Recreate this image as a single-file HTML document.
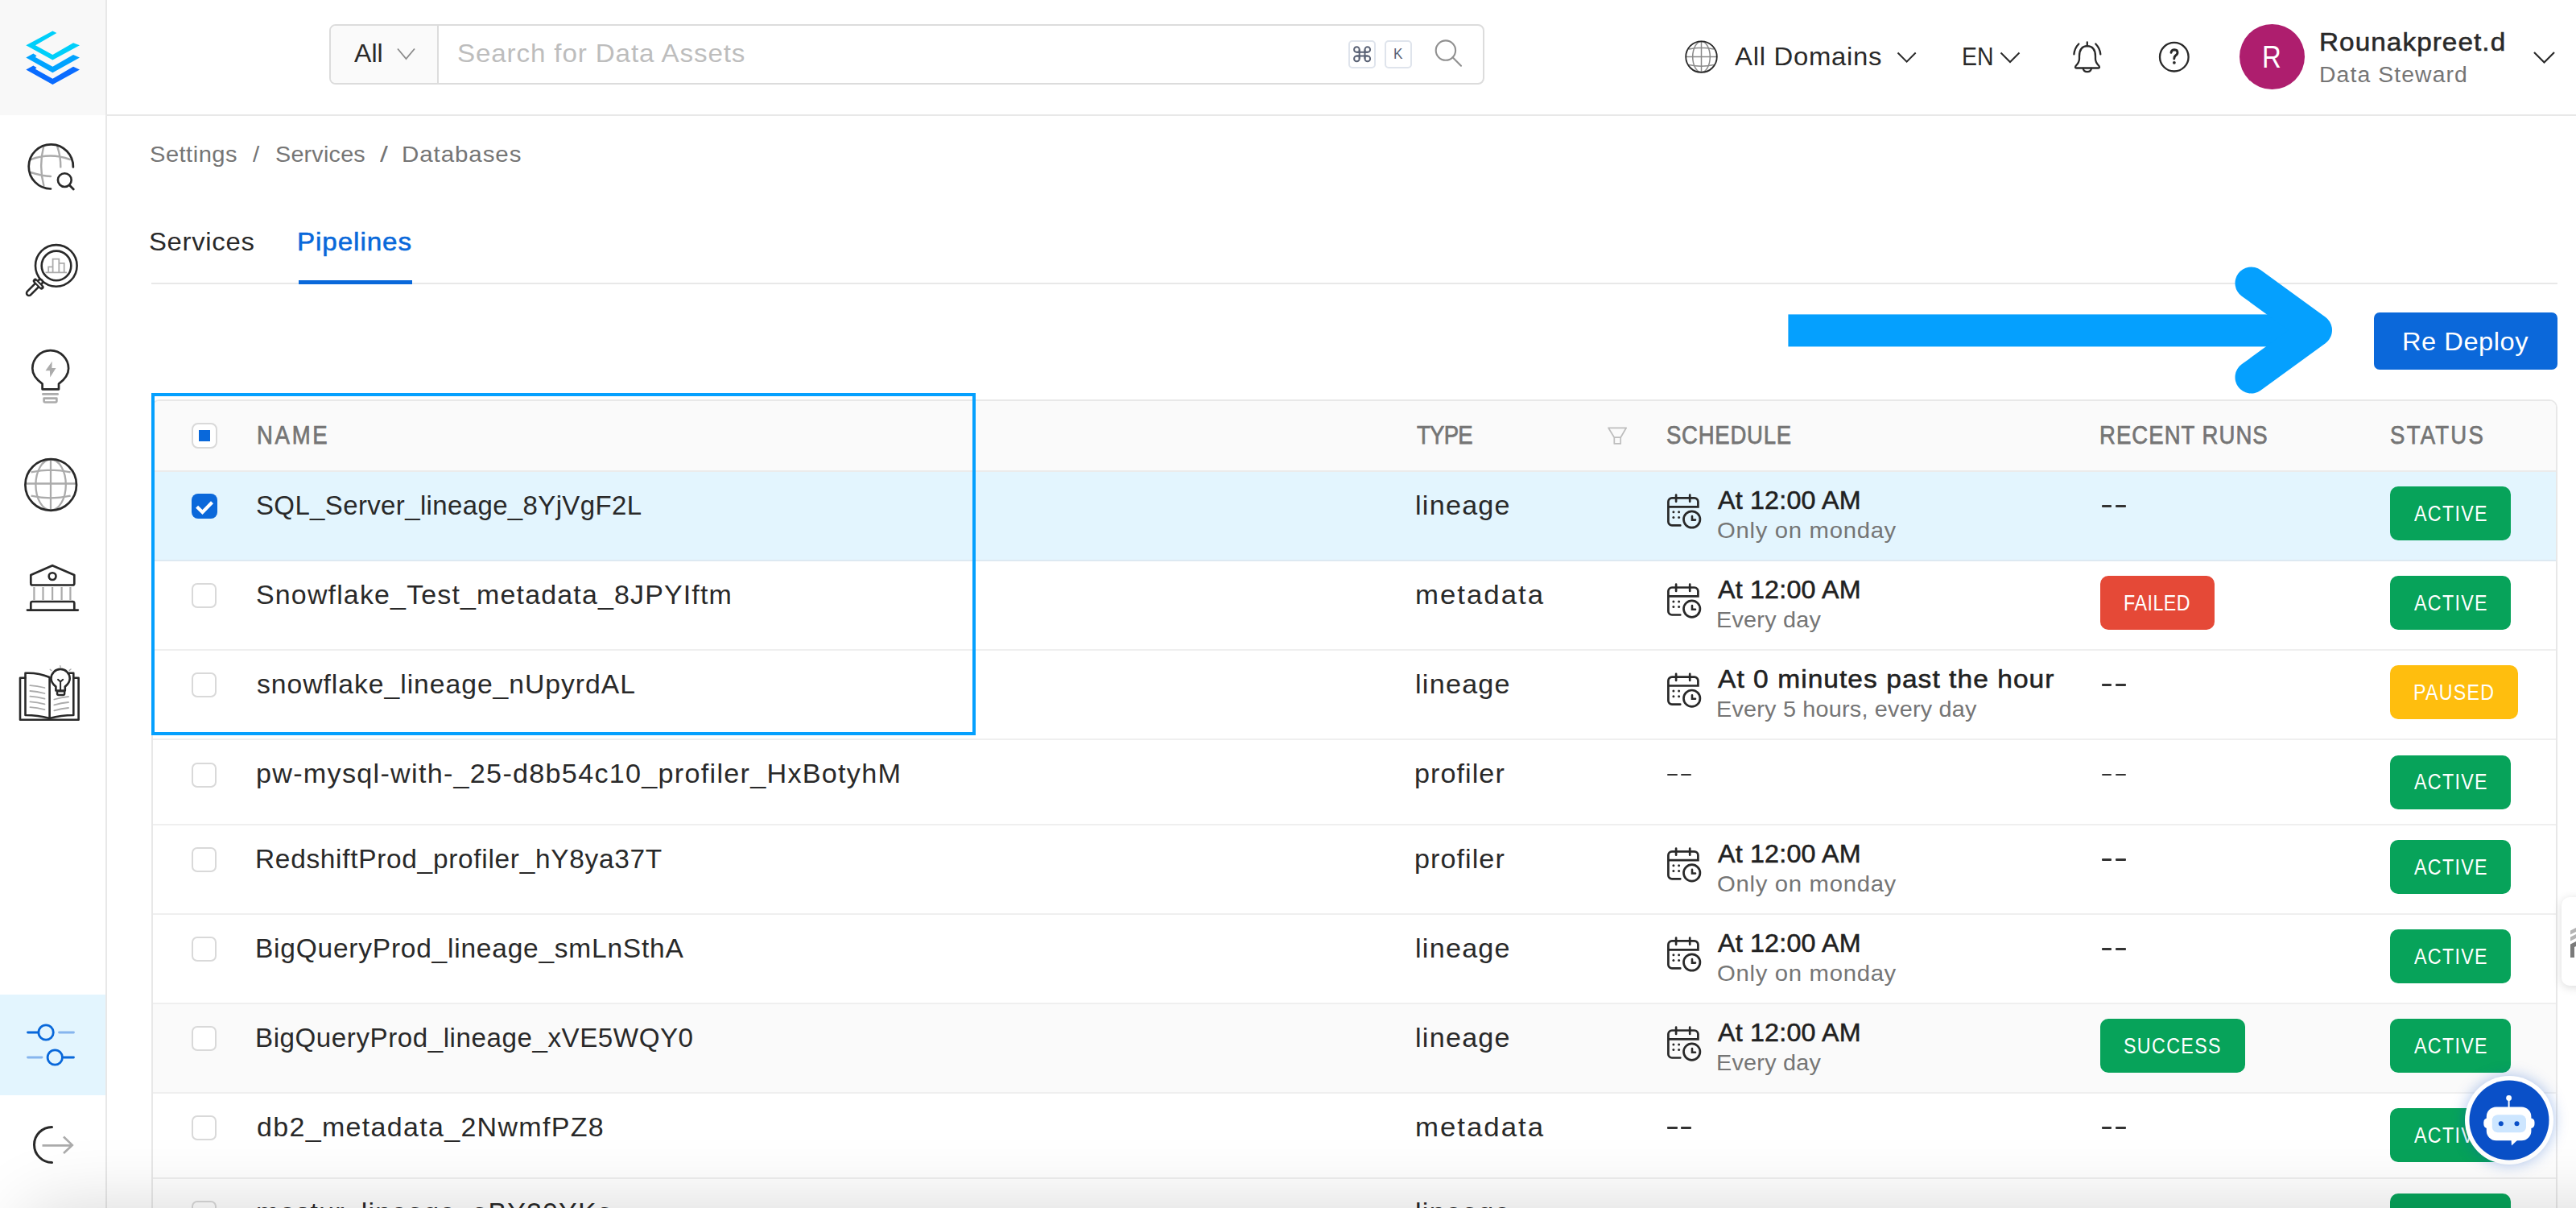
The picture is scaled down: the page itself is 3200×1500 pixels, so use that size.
<!DOCTYPE html>
<html><head><meta charset="utf-8"><title>Pipelines</title>
<style>
html,body{margin:0;padding:0;width:3200px;height:1500px;overflow:hidden;background:#fff}
#root{width:3200px;height:1500px;overflow:hidden;position:relative;background:#fff;font-family:"Liberation Sans",sans-serif}
.t{position:absolute;white-space:nowrap;transform-origin:0 0}
.ov{position:absolute;left:0;top:0}
</style></head><body><div id="root">
<div style="position:absolute;left:0px;top:0px;width:131px;height:143px;background:#f8f8f8"></div>
<div style="position:absolute;left:0px;top:1235px;width:131px;height:125px;background:#e3f5fe"></div>
<div style="position:absolute;left:131px;top:0px;width:2px;height:1500px;background:#e8e8e8"></div>
<div style="position:absolute;left:133px;top:142px;width:3067px;height:2px;background:#e8e8e8"></div>
<div style="position:absolute;left:409px;top:29.5px;width:1435px;height:75.5px;box-sizing:border-box;border:2px solid #dcdcdc;border-radius:8px;background:#fff;overflow:hidden"></div>
<div style="position:absolute;left:411px;top:31.5px;width:132px;height:71.5px;background:#fafafa;border-radius:6px 0 0 6px"></div>
<div style="position:absolute;left:543px;top:31.5px;width:2px;height:71.5px;background:#dcdcdc"></div>
<div style="position:absolute;left:1674.7px;top:49.7px;width:34.6px;height:34.9px;box-sizing:border-box;border:2px solid #dfe4ec;border-radius:5px"></div>
<div style="position:absolute;left:1719.7px;top:49.7px;width:34.6px;height:34.9px;box-sizing:border-box;border:2px solid #dfe4ec;border-radius:5px"></div>
<div style="position:absolute;left:2782px;top:30px;width:81px;height:81px;border-radius:50%;background:#ae1e6e"></div>
<div style="position:absolute;left:188px;top:350.5px;width:2989px;height:2px;background:#e8e8e8"></div>
<div style="position:absolute;left:371px;top:348px;width:141px;height:5px;background:#0968da"></div>
<div style="position:absolute;left:2949.2px;top:388.4px;width:227.8px;height:71.1px;background:#0b68da;border-radius:7px"></div>
<div style="position:absolute;left:188px;top:496px;width:2989px;height:1100px;box-sizing:border-box;border:2px solid #e8e8e8;border-radius:10px;background:#fff"></div>
<div style="position:absolute;left:190px;top:498px;width:2985px;height:87px;background:#fafafa;border-radius:8px 8px 0 0"></div>
<div style="position:absolute;left:190px;top:586px;width:2985px;height:110.1px;background:#e3f5fe"></div>
<div style="position:absolute;left:190px;top:584px;width:2985px;height:2px;background:#ebebeb"></div>
<div style="position:absolute;left:190px;top:1246.1px;width:2985px;height:111.1px;background:#fafafa"></div>
<div style="position:absolute;left:190px;top:695.1px;width:2985px;height:2px;background:#dde9f2"></div>
<div style="position:absolute;left:190px;top:806.2px;width:2985px;height:2px;background:#efefef"></div>
<div style="position:absolute;left:190px;top:917.3px;width:2985px;height:2px;background:#efefef"></div>
<div style="position:absolute;left:190px;top:1022.9px;width:2985px;height:2px;background:#efefef"></div>
<div style="position:absolute;left:190px;top:1134px;width:2985px;height:2px;background:#efefef"></div>
<div style="position:absolute;left:190px;top:1245.1px;width:2985px;height:2px;background:#efefef"></div>
<div style="position:absolute;left:190px;top:1356.2px;width:2985px;height:2px;background:#efefef"></div>
<div style="position:absolute;left:190px;top:1461.8px;width:2985px;height:2px;background:#efefef"></div>
<div style="position:absolute;left:238.2px;top:525.4px;width:31.6px;height:31.4px;box-sizing:border-box;border:2px solid #d9d9d9;border-radius:8px;background:#fff"></div>
<div style="position:absolute;left:247px;top:534px;width:14px;height:14px;background:#0968da"></div>
<div style="position:absolute;left:238.1px;top:612.9px;width:31.8px;height:31.6px;background:#0b68da;border-radius:8px"></div>
<div style="position:absolute;left:238.3px;top:724.3000000000001px;width:31.2px;height:31.0px;box-sizing:border-box;border:2px solid #d9d9d9;border-radius:7px;background:#fff"></div>
<div style="position:absolute;left:238.3px;top:835.4000000000001px;width:31.2px;height:31.0px;box-sizing:border-box;border:2px solid #d9d9d9;border-radius:7px;background:#fff"></div>
<div style="position:absolute;left:238.3px;top:946.5px;width:31.2px;height:31.0px;box-sizing:border-box;border:2px solid #d9d9d9;border-radius:7px;background:#fff"></div>
<div style="position:absolute;left:238.3px;top:1052.1px;width:31.2px;height:31.0px;box-sizing:border-box;border:2px solid #d9d9d9;border-radius:7px;background:#fff"></div>
<div style="position:absolute;left:238.3px;top:1163.2px;width:31.2px;height:31.0px;box-sizing:border-box;border:2px solid #d9d9d9;border-radius:7px;background:#fff"></div>
<div style="position:absolute;left:238.3px;top:1274.3px;width:31.2px;height:31.0px;box-sizing:border-box;border:2px solid #d9d9d9;border-radius:7px;background:#fff"></div>
<div style="position:absolute;left:238.3px;top:1385.4px;width:31.2px;height:31.0px;box-sizing:border-box;border:2px solid #d9d9d9;border-radius:7px;background:#fff"></div>
<div style="position:absolute;left:238.3px;top:1491.0px;width:31.2px;height:31.0px;box-sizing:border-box;border:2px solid #d9d9d9;border-radius:7px;background:#fff"></div>
<div style="position:absolute;left:2610.8px;top:627.2px;width:12.6px;height:2.6px;background:#333;border-radius:1px"></div>
<div style="position:absolute;left:2628.2px;top:627.2px;width:12.6px;height:2.6px;background:#333;border-radius:1px"></div>
<div style="position:absolute;left:2968.7px;top:604.2px;width:150.2px;height:67px;background:#07a35a;border-radius:10px"></div>
<div style="position:absolute;left:2609px;top:715.3000000000001px;width:141.7px;height:67px;background:#e54937;border-radius:10px"></div>
<div style="position:absolute;left:2968.7px;top:715.3000000000001px;width:150.2px;height:67px;background:#07a35a;border-radius:10px"></div>
<div style="position:absolute;left:2610.8px;top:849.4000000000001px;width:12.6px;height:2.6px;background:#333;border-radius:1px"></div>
<div style="position:absolute;left:2628.2px;top:849.4000000000001px;width:12.6px;height:2.6px;background:#333;border-radius:1px"></div>
<div style="position:absolute;left:2968.7px;top:826.4000000000001px;width:159.3px;height:67px;background:#ffbe0e;border-radius:10px"></div>
<div style="position:absolute;left:2610.8px;top:960.5px;width:12.6px;height:2.6px;background:#333;border-radius:1px"></div>
<div style="position:absolute;left:2628.2px;top:960.5px;width:12.6px;height:2.6px;background:#333;border-radius:1px"></div>
<div style="position:absolute;left:2071.0px;top:960.5px;width:12.6px;height:2.6px;background:#333;border-radius:1px"></div>
<div style="position:absolute;left:2088.4px;top:960.5px;width:12.6px;height:2.6px;background:#333;border-radius:1px"></div>
<div style="position:absolute;left:2968.7px;top:937.5px;width:150.2px;height:67px;background:#07a35a;border-radius:10px"></div>
<div style="position:absolute;left:2610.8px;top:1066.1px;width:12.6px;height:2.6px;background:#333;border-radius:1px"></div>
<div style="position:absolute;left:2628.2px;top:1066.1px;width:12.6px;height:2.6px;background:#333;border-radius:1px"></div>
<div style="position:absolute;left:2968.7px;top:1043.1px;width:150.2px;height:67px;background:#07a35a;border-radius:10px"></div>
<div style="position:absolute;left:2610.8px;top:1177.2px;width:12.6px;height:2.6px;background:#333;border-radius:1px"></div>
<div style="position:absolute;left:2628.2px;top:1177.2px;width:12.6px;height:2.6px;background:#333;border-radius:1px"></div>
<div style="position:absolute;left:2968.7px;top:1154.2px;width:150.2px;height:67px;background:#07a35a;border-radius:10px"></div>
<div style="position:absolute;left:2609px;top:1265.3px;width:179.8px;height:67px;background:#07a35a;border-radius:10px"></div>
<div style="position:absolute;left:2968.7px;top:1265.3px;width:150.2px;height:67px;background:#07a35a;border-radius:10px"></div>
<div style="position:absolute;left:2610.8px;top:1399.4px;width:12.6px;height:2.6px;background:#333;border-radius:1px"></div>
<div style="position:absolute;left:2628.2px;top:1399.4px;width:12.6px;height:2.6px;background:#333;border-radius:1px"></div>
<div style="position:absolute;left:2071.0px;top:1399.4px;width:12.6px;height:2.6px;background:#333;border-radius:1px"></div>
<div style="position:absolute;left:2088.4px;top:1399.4px;width:12.6px;height:2.6px;background:#333;border-radius:1px"></div>
<div style="position:absolute;left:2968.7px;top:1376.4px;width:150.2px;height:67px;background:#07a35a;border-radius:10px"></div>
<div style="position:absolute;left:2610.8px;top:1505.0px;width:12.6px;height:2.6px;background:#333;border-radius:1px"></div>
<div style="position:absolute;left:2628.2px;top:1505.0px;width:12.6px;height:2.6px;background:#333;border-radius:1px"></div>
<div style="position:absolute;left:2071.0px;top:1505.0px;width:12.6px;height:2.6px;background:#333;border-radius:1px"></div>
<div style="position:absolute;left:2088.4px;top:1505.0px;width:12.6px;height:2.6px;background:#333;border-radius:1px"></div>
<div style="position:absolute;left:2968.7px;top:1482.0px;width:150.2px;height:67px;background:#07a35a;border-radius:10px"></div>
<div style="position:absolute;left:3182px;top:1114px;width:40px;height:110px;background:#fff;border-radius:10px;box-shadow:0 2px 12px rgba(0,0,0,0.15)"></div>
<svg class="ov" width="3200" height="1500" viewBox="0 0 3200 1500">
<!-- logo -->
<polygon fill="#00cffa" points="65.4,38.4 70.4,40.9 44,56.3 65.4,68 91,53.3 99,56.3 65.4,74.5 32.3,56.3"/>
<polygon fill="#00a3ff" points="32.3,71.5 41.4,66.6 45.5,69.2 43.9,70.9 65.4,82.8 91,67.9 99,71.5 65.4,90.2"/>
<polygon fill="#0a6cff" points="32.3,86.4 41.4,81.5 45.5,84.1 43.9,85.8 65.4,97.7 91,82.8 99,86.4 65.4,105.1"/>
<!-- sidebar icon 1: globe search -->
<g fill="none" stroke-linecap="round">
<path d="M54.1 182.2 Q48 206 54.4 230.6 M71.3 182.2 Q75.5 195 75.3 207.4 M38.2 198.1 Q62.4 189 86.9 198 M38.2 214 Q52 218.5 63 219" stroke="#ababab" stroke-width="2.4"/>
<path d="M63 234.5 A27.6 27.6 0 1 1 90.9 207.4" stroke="#292929" stroke-width="2.7"/>
<circle cx="80.3" cy="223.6" r="8.4" stroke="#292929" stroke-width="2.6"/>
<path d="M86.6 230.2 L91.3 235" stroke="#292929" stroke-width="2.8"/>
</g>
<!-- icon 2: magnifier chart -->
<g fill="none">
<circle cx="69.8" cy="329.9" r="25.8" stroke="#292929" stroke-width="2.6"/>
<circle cx="70" cy="329.9" r="18.3" stroke="#292929" stroke-width="2.6"/>
<path d="M56.5 338.4 H83 M60.2 338.4 V331.4 H65.6 V338.4 M65.6 338.4 V321.6 H73.3 V338.4 M73.3 338.4 V326.8 H79.7 V338.4" stroke="#ababab" stroke-width="1.8"/>
<path d="M36 364 L50 350" stroke="#292929" stroke-width="8.5" stroke-linecap="round"/>
<path d="M36 364 L50 350" stroke="#fff" stroke-width="3.4" stroke-linecap="round"/>
<path d="M43.8 348.8 L51.6 356.6" stroke="#292929" stroke-width="6" stroke-linecap="round"/>
<path d="M44.6 349.6 L50.8 355.8" stroke="#fff" stroke-width="1.8" stroke-linecap="round"/>
</g>
<!-- icon 3: bulb -->
<g fill="none" stroke-linejoin="round">
<path d="M52.6 483.3 V476.6 Q40.3 468 40.3 457.6 A22.4 22.4 0 0 1 85.1 457.6 Q85.1 468 73 476.6 V483.3 Z" stroke="#292929" stroke-width="2.7"/>
<path d="M53.4 489.4 H71.6" stroke="#ababab" stroke-width="2.8" stroke-linecap="round"/>
<path d="M54.6 494.6 H70.4 V498 A1.5 1.5 0 0 1 68.9 499.5 H56.1 A1.5 1.5 0 0 1 54.6 498 Z" stroke="#ababab" stroke-width="2.6"/>
<polygon points="64.7,448.7 56.5,460.2 61.9,460.2 62.3,468.5 69.5,457 64.4,457" fill="#ababab"/>
</g>
<!-- icon 4: globe -->
<g fill="none">
<g stroke="#ababab" stroke-width="2.3">
<path d="M63 571 V633 M32 600.5 H94.5 M38.6 586.3 Q63 581 87.6 586.3 M38.6 615.7 Q63 621 87.6 615.7"/>
<ellipse cx="63.1" cy="602" rx="18.7" ry="31.5"/>
</g>
<circle cx="63.2" cy="602" r="31.8" stroke="#292929" stroke-width="2.7"/>
</g>
<!-- icon 5: bank -->
<g fill="none" stroke-linejoin="round">
<path d="M65.1 702.2 L38.3 714 V724.5 A2 2 0 0 0 40.3 726.5 H90.3 A2 2 0 0 0 92.3 724.5 V714 Z" stroke="#292929" stroke-width="2.7"/>
<circle cx="65.1" cy="715.6" r="4.4" stroke="#292929" stroke-width="2.6"/>
<path d="M42.4 729 V745 M53.5 729 V745 M65.1 729 V745 M76.6 729 V745 M87.4 729 V745" stroke="#ababab" stroke-width="2.2"/>
<path d="M38.3 757.3 V749 A2 2 0 0 1 40.3 747 H90.3 A2 2 0 0 1 92.3 749 V757.3" stroke="#292929" stroke-width="2.7"/>
<path d="M34 757.6 H96.7" stroke="#292929" stroke-width="2.9" stroke-linecap="round"/>
</g>
<!-- icon 6: book with bulb -->
<g fill="none" stroke-linejoin="round" stroke-linecap="round">
<path d="M31.5 841.7 H25 V893.8 H97.6 V841.7 H91.3" stroke="#292929" stroke-width="2.6"/>
<path d="M61.6 892 V841 Q47 835 31.5 835.8 V888 Q47 888 61.6 892 Q76 888 91.3 888 V835.8 H86" stroke="#292929" stroke-width="2.6"/>
<path d="M37.4 851.2 Q46 851.7 55.5 854 M37.4 858 Q46 858.5 55.5 861 M37.4 864.7 Q46 865.2 55.5 867.7 M37.4 871.4 Q46 871.9 55.5 874.4 M37.4 878.1 Q46 878.6 55.5 881.1" stroke="#ababab" stroke-width="1.8"/>
<path d="M67.3 868.5 Q76 866 85 865 M67.3 875.4 Q76 873 85 872 M67.3 882.3 Q76 880 85 879" stroke="#ababab" stroke-width="1.8"/>
<path d="M69.4 857.5 V852.6 Q63.5 848 63.5 842.5 A11.6 11.6 0 0 1 86.7 842.5 Q86.7 848 80.8 852.6 V857.5 Z" stroke="#292929" stroke-width="2.6" fill="#fff"/>
<path d="M71 858.2 H80.2 V861 A2 2 0 0 1 78.2 863 H73 A2 2 0 0 1 71 861 Z" stroke="#292929" stroke-width="2.4"/>
<path d="M75.1 857 V846.5 M72 843.8 L75.1 846.5 L78.2 843.8" stroke="#292929" stroke-width="2"/>
<path d="M62.2 831.2 L63.8 832.6 M74.8 826.6 L75.2 828.8 M86.2 832.4 L88 831" stroke="#ababab" stroke-width="1.4"/>
</g>
<!-- icon 7: sliders (active) -->
<g fill="none" stroke-linecap="round">
<path d="M34.5 1282 H46.5" stroke="#0968da" stroke-width="2.8"/>
<path d="M73.5 1282 H91.5 M34.5 1313 H52" stroke="#86b5ee" stroke-width="2.8"/>
<path d="M79 1313 H91.5" stroke="#0968da" stroke-width="2.8"/>
<circle cx="57.1" cy="1282" r="9.2" stroke="#0968da" stroke-width="2.8"/>
<circle cx="68.3" cy="1313" r="9.2" stroke="#0968da" stroke-width="2.8"/>
</g>
<!-- icon 8: logout -->
<g fill="none" stroke-linecap="round">
<path d="M64.5 1399.4 A22 22 0 0 0 64.5 1443.4" stroke="#292929" stroke-width="3"/>
<path d="M52.5 1422.4 H89.5 M79 1411.5 L89.8 1421.9 L79 1432" stroke="#ababab" stroke-width="2.6" stroke-linecap="butt"/>
</g>
<!-- header: select chevron -->
<path d="M494 60.5 L504.5 73 L515 60.5" fill="none" stroke="#8c8c8c" stroke-width="1.8"/>
<!-- cmd glyph -->
<g fill="none" stroke="#5a6275" stroke-width="2">
<path d="M1688.7 61.5 V73 M1695.5 61.5 V73 M1685 64.8 H1699 M1685 69.6 H1699"/>
<path d="M1688.7 64.8 H1685.6 A3.3 3.3 0 1 1 1688.7 61.5 Z M1695.5 64.8 V61.5 A3.3 3.3 0 1 1 1698.8 64.8 Z M1688.7 69.6 V72.9 A3.3 3.3 0 1 1 1685.4 69.6 Z M1695.5 69.6 H1698.8 A3.3 3.3 0 1 1 1695.5 72.9 Z"/>
</g>
<!-- search icon -->
<g fill="none" stroke="#909090" stroke-width="2.1" stroke-linecap="round">
<circle cx="1795.9" cy="62.6" r="12.2"/>
<path d="M1804.6 71.3 L1815 81.7"/>
</g>
<!-- domain globe -->
<g fill="none">
<g stroke="#8a8a8a" stroke-width="1.5">
<path d="M2113.5 52 V89.5 M2095 70.6 H2132 M2098 61 Q2113.5 57.5 2129 61 M2098 80.5 Q2113.5 84 2129 80.5"/>
<ellipse cx="2113.5" cy="70.6" rx="10.8" ry="19"/>
</g>
<circle cx="2113.5" cy="70.6" r="19.3" stroke="#292929" stroke-width="1.8"/>
</g>
<path d="M2357.5 65.5 L2368.6 76.6 L2379.7 65.5" fill="none" stroke="#292929" stroke-width="2"/>
<path d="M2485.5 65.5 L2497 77 L2508.5 65.5" fill="none" stroke="#292929" stroke-width="2"/>
<!-- bell -->
<g fill="none" stroke="#292929" stroke-width="2.3" stroke-linecap="round" stroke-linejoin="round">
<path d="M2592.8 57.2 Q2583 57.5 2583 70 V73 Q2583 77.5 2578.5 82 Q2577 84.5 2580 84.5 H2606 Q2609 84.5 2607.5 82 Q2603 77.5 2603 73 V70 Q2603 57.5 2592.8 57.2 Z"/>
<path d="M2592.8 52.5 V57 M2587.7 84.8 A5.2 5 0 0 0 2598 84.8"/>
<path d="M2582.3 54.5 Q2577 60 2576.4 67.4 M2603.3 54.5 Q2608.6 60 2609.3 67.4"/>
</g>
<!-- help -->
<circle cx="2700.8" cy="70.7" r="17.8" fill="none" stroke="#292929" stroke-width="2.3"/>
<path d="M2697 65.3 Q2697.5 61.8 2701.3 61.8 Q2705 62 2705 65.3 Q2705 67.5 2702.5 69 Q2700.8 70.3 2700.8 73" fill="none" stroke="#292929" stroke-width="2.9" stroke-linecap="round"/>
<circle cx="2700.9" cy="77.8" r="1.9" fill="#292929"/>
<!-- user chevron -->
<path d="M3148 65 L3160.5 77.5 L3173 65" fill="none" stroke="#292929" stroke-width="2.2"/>
<!-- header checkbox check -->
<path d="M244.6 629.2 L251.5 636 L263.5 623.7" fill="none" stroke="#fff" stroke-width="4.2" stroke-linejoin="miter"/>
<!-- filter icon -->
<path d="M1998 531.3 H2020.2 L2013.2 543.2 V550.9 H2005.3 V543.2 Z M2005.3 543.2 H2013.2" fill="none" stroke="#bdbdbd" stroke-width="1.7" stroke-linejoin="round"/>
<g transform="translate(0,0.00)" stroke="#292929" stroke-width="2.7" fill="none" stroke-linecap="round">
<path d="M2087.3 652.4 H2077 a4.6 4.6 0 0 1 -4.6 -4.6 V623 a4.6 4.6 0 0 1 4.6 -4.6 H2104.8 a4.6 4.6 0 0 1 4.6 4.6 V629.3 H2072.4"/>
<path d="M2082.1 614.6 V622.8 M2099.2 614.6 V622.8"/>
<circle cx="2101.7" cy="645" r="10.2"/>
<path d="M2102 641 V645.6 H2106" stroke-width="2.6"/>
<g fill="#292929" stroke="none"><circle cx="2078.9" cy="635.8" r="1.5"/><circle cx="2085.6" cy="635.8" r="1.5"/><circle cx="2078.9" cy="642.5" r="1.5"/><circle cx="2085.6" cy="642.5" r="1.5"/></g>
</g>
<g transform="translate(0,111.10)" stroke="#292929" stroke-width="2.7" fill="none" stroke-linecap="round">
<path d="M2087.3 652.4 H2077 a4.6 4.6 0 0 1 -4.6 -4.6 V623 a4.6 4.6 0 0 1 4.6 -4.6 H2104.8 a4.6 4.6 0 0 1 4.6 4.6 V629.3 H2072.4"/>
<path d="M2082.1 614.6 V622.8 M2099.2 614.6 V622.8"/>
<circle cx="2101.7" cy="645" r="10.2"/>
<path d="M2102 641 V645.6 H2106" stroke-width="2.6"/>
<g fill="#292929" stroke="none"><circle cx="2078.9" cy="635.8" r="1.5"/><circle cx="2085.6" cy="635.8" r="1.5"/><circle cx="2078.9" cy="642.5" r="1.5"/><circle cx="2085.6" cy="642.5" r="1.5"/></g>
</g>
<g transform="translate(0,222.20)" stroke="#292929" stroke-width="2.7" fill="none" stroke-linecap="round">
<path d="M2087.3 652.4 H2077 a4.6 4.6 0 0 1 -4.6 -4.6 V623 a4.6 4.6 0 0 1 4.6 -4.6 H2104.8 a4.6 4.6 0 0 1 4.6 4.6 V629.3 H2072.4"/>
<path d="M2082.1 614.6 V622.8 M2099.2 614.6 V622.8"/>
<circle cx="2101.7" cy="645" r="10.2"/>
<path d="M2102 641 V645.6 H2106" stroke-width="2.6"/>
<g fill="#292929" stroke="none"><circle cx="2078.9" cy="635.8" r="1.5"/><circle cx="2085.6" cy="635.8" r="1.5"/><circle cx="2078.9" cy="642.5" r="1.5"/><circle cx="2085.6" cy="642.5" r="1.5"/></g>
</g>
<g transform="translate(0,438.90)" stroke="#292929" stroke-width="2.7" fill="none" stroke-linecap="round">
<path d="M2087.3 652.4 H2077 a4.6 4.6 0 0 1 -4.6 -4.6 V623 a4.6 4.6 0 0 1 4.6 -4.6 H2104.8 a4.6 4.6 0 0 1 4.6 4.6 V629.3 H2072.4"/>
<path d="M2082.1 614.6 V622.8 M2099.2 614.6 V622.8"/>
<circle cx="2101.7" cy="645" r="10.2"/>
<path d="M2102 641 V645.6 H2106" stroke-width="2.6"/>
<g fill="#292929" stroke="none"><circle cx="2078.9" cy="635.8" r="1.5"/><circle cx="2085.6" cy="635.8" r="1.5"/><circle cx="2078.9" cy="642.5" r="1.5"/><circle cx="2085.6" cy="642.5" r="1.5"/></g>
</g>
<g transform="translate(0,550.00)" stroke="#292929" stroke-width="2.7" fill="none" stroke-linecap="round">
<path d="M2087.3 652.4 H2077 a4.6 4.6 0 0 1 -4.6 -4.6 V623 a4.6 4.6 0 0 1 4.6 -4.6 H2104.8 a4.6 4.6 0 0 1 4.6 4.6 V629.3 H2072.4"/>
<path d="M2082.1 614.6 V622.8 M2099.2 614.6 V622.8"/>
<circle cx="2101.7" cy="645" r="10.2"/>
<path d="M2102 641 V645.6 H2106" stroke-width="2.6"/>
<g fill="#292929" stroke="none"><circle cx="2078.9" cy="635.8" r="1.5"/><circle cx="2085.6" cy="635.8" r="1.5"/><circle cx="2078.9" cy="642.5" r="1.5"/><circle cx="2085.6" cy="642.5" r="1.5"/></g>
</g>
<g transform="translate(0,661.10)" stroke="#292929" stroke-width="2.7" fill="none" stroke-linecap="round">
<path d="M2087.3 652.4 H2077 a4.6 4.6 0 0 1 -4.6 -4.6 V623 a4.6 4.6 0 0 1 4.6 -4.6 H2104.8 a4.6 4.6 0 0 1 4.6 4.6 V629.3 H2072.4"/>
<path d="M2082.1 614.6 V622.8 M2099.2 614.6 V622.8"/>
<circle cx="2101.7" cy="645" r="10.2"/>
<path d="M2102 641 V645.6 H2106" stroke-width="2.6"/>
<g fill="#292929" stroke="none"><circle cx="2078.9" cy="635.8" r="1.5"/><circle cx="2085.6" cy="635.8" r="1.5"/><circle cx="2078.9" cy="642.5" r="1.5"/><circle cx="2085.6" cy="642.5" r="1.5"/></g>
</g>
<!-- arrow annotation -->
<rect x="2221.4" y="390.4" width="650" height="40" fill="#05a0fe"/>
<path d="M2796.5 351.5 L2877 410 L2796.5 468.5" fill="none" stroke="#05a0fe" stroke-width="40" stroke-linecap="round" stroke-linejoin="round"/>
<!-- selection box -->
<rect x="190" y="490" width="1020" height="421" fill="none" stroke="#05a0fe" stroke-width="4"/>
</svg>
<div class="t" style="left:439.80px;top:50.40px;font-size:32px;line-height:32px;color:#292929;font-weight:400;letter-spacing:0.030px;transform:scaleX(1.0012)">All</div>
<div class="t" style="left:567.93px;top:50.40px;font-size:32px;line-height:32px;color:#bdbdbd;font-weight:400;letter-spacing:0.827px;transform:scaleX(1.0370)">Search for Data Assets</div>
<div class="t" style="left:1731.37px;top:58.07px;font-size:18.5px;line-height:18.5px;color:#5a6275;font-weight:400;letter-spacing:0.000px;transform:scaleX(0.9273)">K</div>
<div class="t" style="left:2155.20px;top:53.60px;font-size:32px;line-height:32px;color:#292929;font-weight:400;letter-spacing:0.683px;transform:scaleX(1.0275)">All Domains</div>
<div class="t" style="left:2437.13px;top:54.20px;font-size:32px;line-height:32px;color:#292929;font-weight:400;letter-spacing:0.000px;transform:scaleX(0.8897)">EN</div>
<div class="t" style="left:2809.80px;top:51.60px;font-size:38px;line-height:38px;color:#ffffff;font-weight:400;letter-spacing:0.000px;transform:scaleX(0.8652)">R</div>
<div class="t" style="left:2880.82px;top:35.60px;font-size:32px;line-height:32px;color:#292929;font-weight:400;-webkit-text-stroke:0.55px currentColor;letter-spacing:1.014px;transform:scaleX(1.0408)">Rounakpreet.d</div>
<div class="t" style="left:2880.80px;top:79.85px;font-size:27px;line-height:27px;color:#757575;font-weight:400;letter-spacing:1.044px;transform:scaleX(1.0502)">Data Steward</div>
<div class="t" style="left:186.48px;top:176.97px;font-size:28.5px;line-height:28.5px;color:#757575;font-weight:400;letter-spacing:0.461px;transform:scaleX(1.0218)">Settings</div>
<div class="t" style="left:313.70px;top:176.97px;font-size:28.5px;line-height:28.5px;color:#757575;font-weight:400;letter-spacing:0.000px;transform:scaleX(1.0375)">/</div>
<div class="t" style="left:341.89px;top:176.97px;font-size:28.5px;line-height:28.5px;color:#757575;font-weight:400;letter-spacing:0.204px;transform:scaleX(1.0090)">Services</div>
<div class="t" style="left:472.00px;top:176.97px;font-size:28.5px;line-height:28.5px;color:#757575;font-weight:400;letter-spacing:0.000px;transform:scaleX(1.2500)">/</div>
<div class="t" style="left:498.53px;top:176.97px;font-size:28.5px;line-height:28.5px;color:#757575;font-weight:400;letter-spacing:0.876px;transform:scaleX(1.0364)">Databases</div>
<div class="t" style="left:185.45px;top:283.50px;font-size:32px;line-height:32px;color:#292929;font-weight:400;letter-spacing:0.676px;transform:scaleX(1.0270)">Services</div>
<div class="t" style="left:369.42px;top:283.50px;font-size:32px;line-height:32px;color:#0968da;font-weight:400;-webkit-text-stroke:0.55px currentColor;letter-spacing:0.874px;transform:scaleX(1.0381)">Pipelines</div>
<div class="t" style="left:2983.94px;top:407.80px;font-size:32px;line-height:32px;color:#ffffff;font-weight:400;letter-spacing:0.515px;transform:scaleX(1.0192)">Re Deploy</div>
<div class="t" style="left:319.08px;top:524.30px;font-size:32px;line-height:32px;color:#757575;font-weight:400;-webkit-text-stroke:0.75px currentColor;letter-spacing:3.178px;transform:scaleX(0.8600)">NAME</div>
<div class="t" style="left:1759.80px;top:524.30px;font-size:32px;line-height:32px;color:#757575;font-weight:400;-webkit-text-stroke:0.75px currentColor;letter-spacing:-0.884px;transform:scaleX(0.8600)">TYPE</div>
<div class="t" style="left:2070.14px;top:524.30px;font-size:32px;line-height:32px;color:#757575;font-weight:400;-webkit-text-stroke:0.75px currentColor;letter-spacing:0.867px;transform:scaleX(0.8600)">SCHEDULE</div>
<div class="t" style="left:2608.08px;top:524.30px;font-size:32px;line-height:32px;color:#757575;font-weight:400;-webkit-text-stroke:0.75px currentColor;letter-spacing:1.212px;transform:scaleX(0.8600)">RECENT RUNS</div>
<div class="t" style="left:2968.54px;top:524.30px;font-size:32px;line-height:32px;color:#757575;font-weight:400;-webkit-text-stroke:0.75px currentColor;letter-spacing:2.651px;transform:scaleX(0.8600)">STATUS</div>
<div class="t" style="left:317.97px;top:611.98px;font-size:32.5px;line-height:32.5px;color:#292929;font-weight:400;letter-spacing:0.373px;transform:scaleX(1.0143)">SQL_Server_lineage_8YjVgF2L</div>
<div class="t" style="left:1757.70px;top:611.98px;font-size:32.5px;line-height:32.5px;color:#292929;font-weight:400;letter-spacing:1.201px;transform:scaleX(1.0494)">lineage</div>
<div class="t" style="left:2133.60px;top:605.20px;font-size:32px;line-height:32px;color:#212121;font-weight:400;-webkit-text-stroke:0.55px currentColor;letter-spacing:0.191px;transform:scaleX(1.0074)">At 12:00 AM</div>
<div class="t" style="left:2132.57px;top:643.77px;font-size:28.5px;line-height:28.5px;color:#757575;font-weight:400;letter-spacing:0.660px;transform:scaleX(1.0285)">Only on monday</div>
<div class="t" style="left:2998.70px;top:624.75px;font-size:27px;line-height:27px;color:#ffffff;font-weight:400;letter-spacing:1.553px;transform:scaleX(0.8600)">ACTIVE</div>
<div class="t" style="left:317.91px;top:723.08px;font-size:32.5px;line-height:32.5px;color:#292929;font-weight:400;letter-spacing:1.102px;transform:scaleX(1.0452)">Snowflake_Test_metadata_8JPYIftm</div>
<div class="t" style="left:1757.66px;top:723.08px;font-size:32.5px;line-height:32.5px;color:#292929;font-weight:400;letter-spacing:1.875px;transform:scaleX(1.0699)">metadata</div>
<div class="t" style="left:2133.60px;top:716.30px;font-size:32px;line-height:32px;color:#212121;font-weight:400;-webkit-text-stroke:0.55px currentColor;letter-spacing:0.191px;transform:scaleX(1.0074)">At 12:00 AM</div>
<div class="t" style="left:2131.58px;top:754.88px;font-size:28.5px;line-height:28.5px;color:#757575;font-weight:400;letter-spacing:0.238px;transform:scaleX(1.0102)">Every day</div>
<div class="t" style="left:2638.38px;top:735.85px;font-size:27px;line-height:27px;color:#ffffff;font-weight:400;letter-spacing:0.605px;transform:scaleX(0.8600)">FAILED</div>
<div class="t" style="left:2998.70px;top:735.85px;font-size:27px;line-height:27px;color:#ffffff;font-weight:400;letter-spacing:1.553px;transform:scaleX(0.8600)">ACTIVE</div>
<div class="t" style="left:318.96px;top:834.18px;font-size:32.5px;line-height:32.5px;color:#292929;font-weight:400;letter-spacing:0.921px;transform:scaleX(1.0372)">snowflake_lineage_nUpyrdAL</div>
<div class="t" style="left:1757.70px;top:834.18px;font-size:32.5px;line-height:32.5px;color:#292929;font-weight:400;letter-spacing:1.201px;transform:scaleX(1.0494)">lineage</div>
<div class="t" style="left:2133.60px;top:827.40px;font-size:32px;line-height:32px;color:#212121;font-weight:400;-webkit-text-stroke:0.55px currentColor;letter-spacing:1.006px;transform:scaleX(1.0470)">At 0 minutes past the hour</div>
<div class="t" style="left:2131.58px;top:865.98px;font-size:28.5px;line-height:28.5px;color:#757575;font-weight:400;letter-spacing:0.209px;transform:scaleX(1.0104)">Every 5 hours, every day</div>
<div class="t" style="left:2998.08px;top:846.95px;font-size:27px;line-height:27px;color:#ffffff;font-weight:400;letter-spacing:1.474px;transform:scaleX(0.8600)">PAUSED</div>
<div class="t" style="left:317.90px;top:945.27px;font-size:32.5px;line-height:32.5px;color:#292929;font-weight:400;letter-spacing:1.205px;transform:scaleX(1.0515)">pw-mysql-with-_25-d8b54c10_profiler_HxBotyhM</div>
<div class="t" style="left:1756.50px;top:945.27px;font-size:32.5px;line-height:32.5px;color:#292929;font-weight:400;letter-spacing:1.003px;transform:scaleX(1.0507)">profiler</div>
<div class="t" style="left:2998.70px;top:958.05px;font-size:27px;line-height:27px;color:#ffffff;font-weight:400;letter-spacing:1.553px;transform:scaleX(0.8600)">ACTIVE</div>
<div class="t" style="left:316.91px;top:1050.88px;font-size:32.5px;line-height:32.5px;color:#292929;font-weight:400;letter-spacing:0.676px;transform:scaleX(1.0287)">RedshiftProd_profiler_hY8ya37T</div>
<div class="t" style="left:1756.50px;top:1050.88px;font-size:32.5px;line-height:32.5px;color:#292929;font-weight:400;letter-spacing:1.003px;transform:scaleX(1.0507)">profiler</div>
<div class="t" style="left:2133.60px;top:1044.10px;font-size:32px;line-height:32px;color:#212121;font-weight:400;-webkit-text-stroke:0.55px currentColor;letter-spacing:0.191px;transform:scaleX(1.0074)">At 12:00 AM</div>
<div class="t" style="left:2132.57px;top:1082.68px;font-size:28.5px;line-height:28.5px;color:#757575;font-weight:400;letter-spacing:0.660px;transform:scaleX(1.0285)">Only on monday</div>
<div class="t" style="left:2998.70px;top:1063.65px;font-size:27px;line-height:27px;color:#ffffff;font-weight:400;letter-spacing:1.553px;transform:scaleX(0.8600)">ACTIVE</div>
<div class="t" style="left:316.91px;top:1161.97px;font-size:32.5px;line-height:32.5px;color:#292929;font-weight:400;letter-spacing:0.762px;transform:scaleX(1.0298)">BigQueryProd_lineage_smLnSthA</div>
<div class="t" style="left:1757.70px;top:1161.97px;font-size:32.5px;line-height:32.5px;color:#292929;font-weight:400;letter-spacing:1.201px;transform:scaleX(1.0494)">lineage</div>
<div class="t" style="left:2133.60px;top:1155.20px;font-size:32px;line-height:32px;color:#212121;font-weight:400;-webkit-text-stroke:0.55px currentColor;letter-spacing:0.191px;transform:scaleX(1.0074)">At 12:00 AM</div>
<div class="t" style="left:2132.57px;top:1193.78px;font-size:28.5px;line-height:28.5px;color:#757575;font-weight:400;letter-spacing:0.660px;transform:scaleX(1.0285)">Only on monday</div>
<div class="t" style="left:2998.70px;top:1174.75px;font-size:27px;line-height:27px;color:#ffffff;font-weight:400;letter-spacing:1.553px;transform:scaleX(0.8600)">ACTIVE</div>
<div class="t" style="left:316.94px;top:1273.07px;font-size:32.5px;line-height:32.5px;color:#292929;font-weight:400;letter-spacing:0.536px;transform:scaleX(1.0198)">BigQueryProd_lineage_xVE5WQY0</div>
<div class="t" style="left:1757.70px;top:1273.07px;font-size:32.5px;line-height:32.5px;color:#292929;font-weight:400;letter-spacing:1.201px;transform:scaleX(1.0494)">lineage</div>
<div class="t" style="left:2133.60px;top:1266.30px;font-size:32px;line-height:32px;color:#212121;font-weight:400;-webkit-text-stroke:0.55px currentColor;letter-spacing:0.191px;transform:scaleX(1.0074)">At 12:00 AM</div>
<div class="t" style="left:2131.58px;top:1304.88px;font-size:28.5px;line-height:28.5px;color:#757575;font-weight:400;letter-spacing:0.238px;transform:scaleX(1.0102)">Every day</div>
<div class="t" style="left:2638.44px;top:1285.85px;font-size:27px;line-height:27px;color:#ffffff;font-weight:400;letter-spacing:1.612px;transform:scaleX(0.8600)">SUCCESS</div>
<div class="t" style="left:2998.70px;top:1285.85px;font-size:27px;line-height:27px;color:#ffffff;font-weight:400;letter-spacing:1.553px;transform:scaleX(0.8600)">ACTIVE</div>
<div class="t" style="left:318.95px;top:1384.17px;font-size:32.5px;line-height:32.5px;color:#292929;font-weight:400;letter-spacing:1.262px;transform:scaleX(1.0458)">db2_metadata_2NwmfPZ8</div>
<div class="t" style="left:1757.66px;top:1384.17px;font-size:32.5px;line-height:32.5px;color:#292929;font-weight:400;letter-spacing:1.875px;transform:scaleX(1.0699)">metadata</div>
<div class="t" style="left:2998.70px;top:1396.95px;font-size:27px;line-height:27px;color:#ffffff;font-weight:400;letter-spacing:1.553px;transform:scaleX(0.8600)">ACTIVE</div>
<div class="t" style="left:317.91px;top:1489.77px;font-size:32.5px;line-height:32.5px;color:#292929;font-weight:400;letter-spacing:1.129px;transform:scaleX(1.0434)">mostur_lineage_aBY20YKa</div>
<div class="t" style="left:1757.70px;top:1489.77px;font-size:32.5px;line-height:32.5px;color:#292929;font-weight:400;letter-spacing:1.201px;transform:scaleX(1.0494)">lineage</div>
<div class="t" style="left:2998.70px;top:1502.55px;font-size:27px;line-height:27px;color:#ffffff;font-weight:400;letter-spacing:1.553px;transform:scaleX(0.8600)">ACTIVE</div>
<div style="position:absolute;left:3062px;top:1336px;width:110px;height:110px;border-radius:50%;background:#fff;box-shadow:0 0 18px rgba(11,79,200,0.35)"></div>
<svg class="ov" width="3200" height="1500" viewBox="0 0 3200 1500">
<circle cx="3117" cy="1391" r="49.5" fill="#0a50c8"/>
<rect x="3088.8" y="1374.5" width="55.6" height="41.7" rx="12" fill="#fff"/>
<rect x="3085.3" y="1388.4" width="63.2" height="12.7" rx="5" fill="#fff"/>
<rect x="3095.8" y="1384.3" width="42.2" height="22" rx="7" fill="#cde6ff"/>
<circle cx="3106.8" cy="1395.3" r="3" fill="#0a50c8"/>
<circle cx="3126.5" cy="1395.3" r="3" fill="#0a50c8"/>
<path d="M3116.6 1364 V1375" stroke="#fff" stroke-width="2"/>
<circle cx="3116.6" cy="1363.5" r="3.4" fill="#fff"/>
<polygon points="3119.5,1415 3128,1415 3120,1422.5" fill="#fff"/>
<path d="M3193 1155.5 L3200 1152 V1157 L3193 1160.5 Z M3193 1163.5 L3200 1160 V1165 L3193 1168.5 Z" fill="#b4b4b4"/>
<path d="M3193 1172.5 L3200 1169 V1175 L3198 1176 V1189 H3193 Z" fill="#7a7a7a"/>
</svg>
<div style="position:absolute;left:30px;top:1500px;width:3400px;height:300px;border-radius:40px;box-shadow:0 0 90px rgba(0,0,0,0.16)"></div>
</div></body></html>
